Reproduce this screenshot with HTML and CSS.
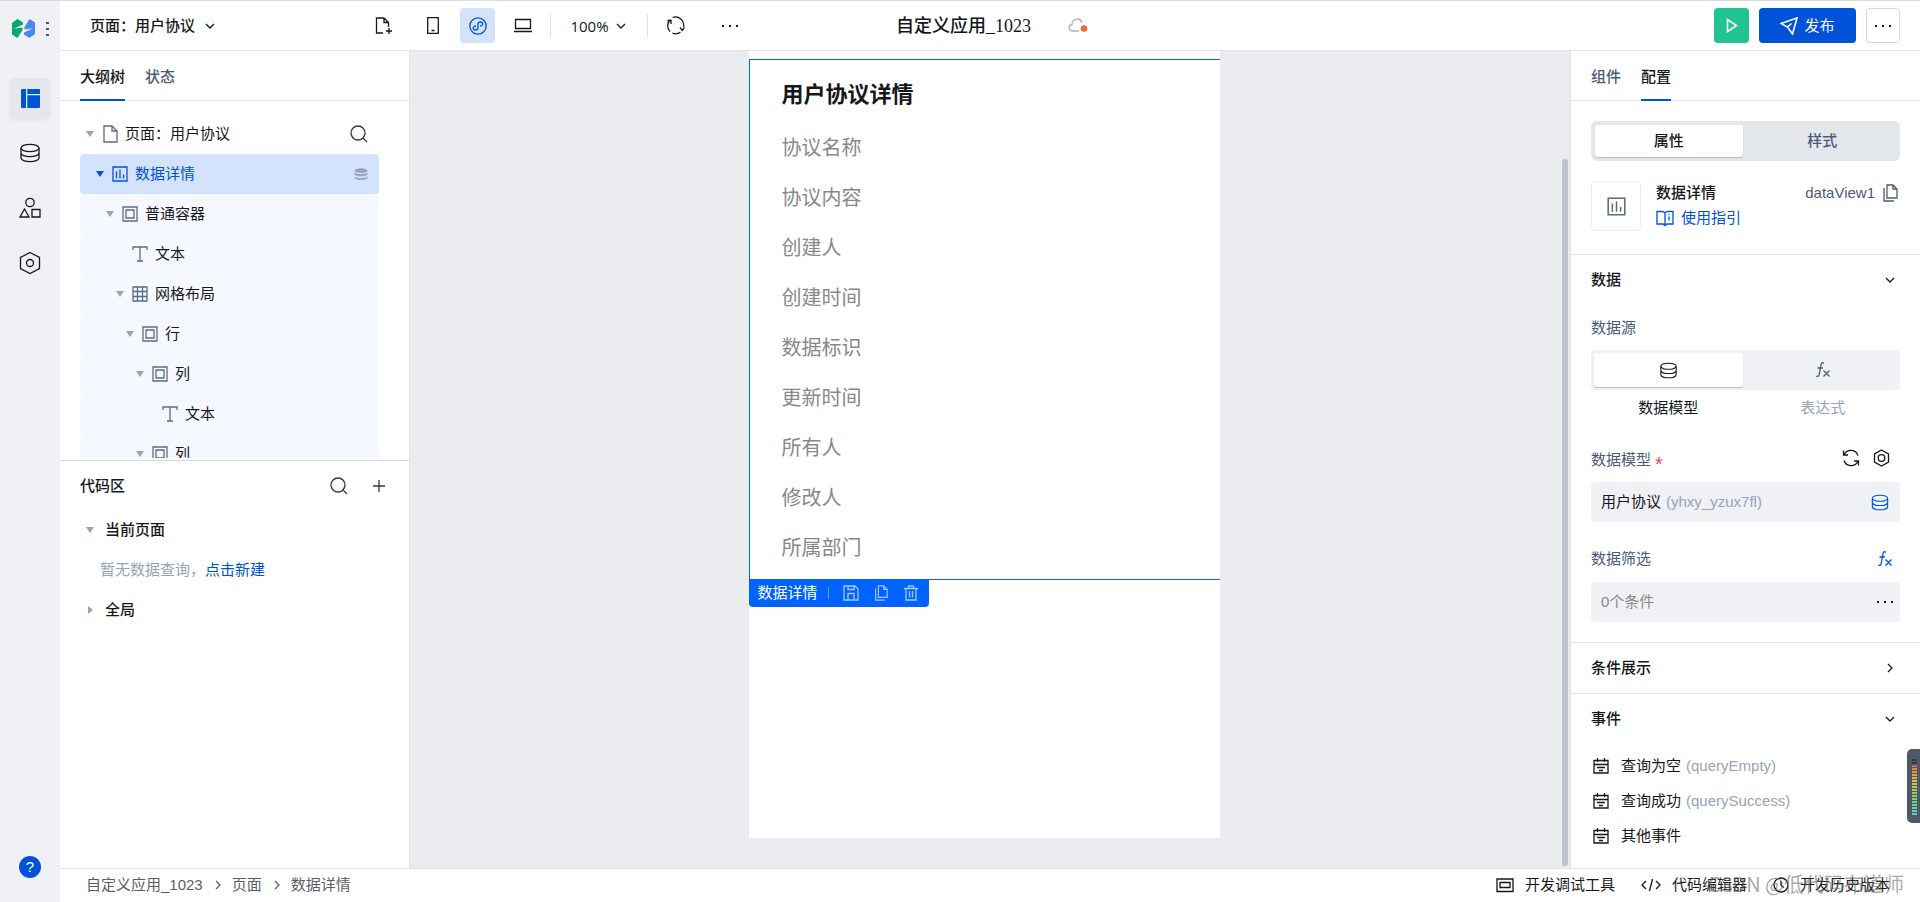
FILE: index.html
```html
<!DOCTYPE html>
<html lang="zh-CN">
<head>
<meta charset="utf-8">
<title>自定义应用_1023</title>
<link rel="stylesheet" href="styles.css">
</head>
<body>
<svg class="sprite" aria-hidden="true">
  <symbol id="chev-down" viewBox="0 0 10 10"><path d="M1 3l4 4 4-4"/></symbol>
  <symbol id="chev-right" viewBox="0 0 10 10"><path d="M3 1l4 4-4 4"/></symbol>
  <symbol id="caret" viewBox="0 0 8 8"><path class="solid" d="M0 1h8L4 7z"/></symbol>
  <symbol id="caret-right" viewBox="0 0 8 8"><path class="solid" d="M2 0v8l5-4z"/></symbol>
  <symbol id="db" viewBox="0 0 20 20"><ellipse cx="10" cy="5" rx="9" ry="3.6"/><path d="M1 5v10c0 2 4 3.6 9 3.6s9-1.600 9-3.600V5M1 10c0 2 4 3.600 9 3.600s9-1.600 9-3.600"/></symbol>
  <symbol id="db-solid" viewBox="0 0 14 13"><ellipse class="solid" cx="7" cy="2.600" rx="6.500" ry="2.300"/><path class="solid" d="M.5 4.500c2.500 2.200 10.500 2.200 13 0v2c-2 2.400-11 2.400-13 0zM.5 8.500c2.500 2.200 10.500 2.200 13 0v1.500c-2 2.800-11 2.800-13 0z"/></symbol>
  <symbol id="file" viewBox="0 0 16 18"><path d="M2 1h8l5 5v11H2zM10 1v5h5"/></symbol>
  <symbol id="chart" viewBox="0 0 16 16"><path d="M1 1h14v14H1zM4.500 5.500v7M8 3.500v9M11.500 8.500v4"/></symbol>
  <symbol id="box" viewBox="0 0 16 16"><path d="M1 1h14v14H1zM4 4h8v8H4z"/></symbol>
  <symbol id="text" viewBox="0 0 16 16"><path d="M1 4V1h14v3M8 1v14M5 15h6"/></symbol>
  <symbol id="grid" viewBox="0 0 16 16"><path d="M1 1h14v14H1zM5.500 1v14M10.500 1v14M1 5.500h14M1 10.500h14"/></symbol>
  <symbol id="search" viewBox="0 0 18 18"><circle cx="8" cy="8" r="7"/><path d="M13 13l4 4"/></symbol>
  <symbol id="dots" viewBox="0 0 16 4"><path class="solid" d="M0 1h2v2H0zM7 1h2v2H7zM14 1h2v2h-2z"/></symbol>
  <symbol id="copy" viewBox="0 0 16 18"><path d="M5 1h6l4 4v9H5zM11 1v4h4M2 4v13h10"/></symbol>
  <symbol id="hex" viewBox="0 0 22 24"><path d="M11 1.500l9.500 5v11L11 22.500l-9.500-5v-11z"/><circle cx="11" cy="12" r="3.500"/></symbol>
  <symbol id="hex-bold" viewBox="0 0 17 18"><path d="M8.500 1l7 4v8l-7 4-7-4V5z"/><circle cx="8.500" cy="9" r="3.300"/></symbol>
  <symbol id="sync" viewBox="0 0 18 18"><path d="M1.500 1.500V6H6M2.200 5.500A7.500 7.500 0 0 1 16 6.500M16.500 16.500V12H12M15.800 12.500A7.500 7.500 0 0 1 2 11.500"/></symbol>
  <symbol id="fx" viewBox="0 0 16 18"><path d="M9 2.500C7.500 1 6.300 1.800 6 3.500L4.200 13.500C3.900 15.300 2.700 16 1.300 15M2.500 7h5.500M8.500 9.500l6 6M14.500 9.500l-6 6"/></symbol>
  <symbol id="event" viewBox="0 0 16 16"><path d="M1 2.500h14v12.500H1zM1 6.500h14M4.500 0v4M11.500 0v4M4 9.500h8M6 12.500h4"/></symbol>
</svg>
<div class="app">
  <nav class="rail">
    <div class="brand">
      <svg class="logo" viewBox="0 0 24 20"><path fill="#07a869" d="M0 4L5.500 0 11 3.500V5.500L2 9.700 10.500 8.500V11L5.500 19 0 15.500z"/><path fill="#4a86f5" d="M23 15l-5.500 4L12 15.500v-2l9-4.200L12.500 10.500V8L17.500 0 23 3.500z"/></svg>
      <svg class="kebab" viewBox="0 0 3 16"><path d="M0 1h3v2H0zM0 7h3v2H0zM0 13h3v2H0z"/></svg>
    </div>
    <button class="rail-btn active" aria-label="布局"><svg class="layout" width="19" height="19" viewBox="0 0 19 19"><path d="M1 0h4v19H1q-1 0-1-1V1q0-1 1-1zM6.300 0H18q1 0 1 1v4H6.300zM6.300 6.300H19V18q0 1-1 1H6.300z"/></svg></button>
    <button class="rail-btn" aria-label="数据"><svg width="22" height="20"><use href="#db"/></svg></button>
    <button class="rail-btn" aria-label="组件"><svg width="22" height="22" viewBox="0 0 22 22"><circle cx="11" cy="5.500" r="4.200"/><path d="M5.500 12l4.500 8H1zM13 12.500h8v7.500h-8z"/></svg></button>
    <button class="rail-btn" aria-label="设置"><svg width="22" height="24"><use href="#hex"/></svg></button>
    <button class="help" aria-label="帮助">?</button>
  </nav>
  <div class="shell">
    <header class="topbar">
      <div class="top-left">
        <button class="page-select">页面：用户协议<svg class="i10"><use href="#chev-down"/></svg></button>
        <div class="tools">
          <button class="tool" aria-label="新建"><svg width="18" height="18" viewBox="0 0 18 18"><path d="M8 16H1.500V1H9l4.500 4.500V10M9 1v4.500h4.500M14 11v6M11 14h6"/></svg></button>
          <button class="tool" aria-label="手机"><svg width="12" height="17" viewBox="0 0 12 17"><path d="M.7.7h10.600v15.600H.7zM4.500 13.500h3"/></svg></button>
          <button class="tool active" aria-label="小程序"><svg width="18" height="18" viewBox="0 0 18 18"><circle cx="9" cy="9" r="8.200"/><path d="M7 9c-4 0-3 4-.5 4C8.300 13 9 12 9 11V7c0-1 .7-2 2.500-2 2.500 0 3.500 4-.5 4"/></svg></button>
          <button class="tool" aria-label="电脑"><svg width="18" height="15" viewBox="0 0 18 15"><path d="M1.500 1.500h15v9h-15zM0 13.500h18"/></svg></button>
          <button class="zoom">100%<svg class="i10"><use href="#chev-down"/></svg></button>
          <button class="tool" aria-label="刷新"><svg width="19" height="19" viewBox="0 0 19 19"><path d="M6.500 1.500a8.300 8.300 0 0 1 11 9.500M14.500 16a8.300 8.300 0 0 1-8 1.200M4 15.500A8.300 8.300 0 0 1 4.500 3.500M1.500 4.500H5V8M18.500 11.500l-2.300 3-2.200-3"/></svg></button>
          <button class="tool" aria-label="更多"><svg width="16" height="4"><use href="#dots"/></svg></button>
        </div>
      </div>
      <div class="app-name"><h1>自定义应用_1023</h1>
        <svg class="cloud" width="20" height="15" viewBox="0 0 20 15"><path d="M11 13H5C0 13 0 7 4 6.500 4.500 0 12.500-1 14 5"/><circle cx="16" cy="10.500" r="3.300"/></svg>
      </div>
      <div class="actions">
        <button class="run" aria-label="运行"><svg width="12" height="15" viewBox="0 0 12 15"><path d="M1.500 1.500v12l9-6z"/></svg></button>
        <button class="publish"><svg width="18" height="18" viewBox="0 0 18 18"><path d="M1 6.500L17 1l-4.500 16-5-7zM7.500 10l4-3.500"/></svg>发布</button>
        <button class="more" aria-label="更多"><svg width="16" height="4"><use href="#dots"/></svg></button>
      </div>
    </header>
    <div class="work">
      <aside class="left">
        <div class="tabs"><button class="tab on">大纲树</button><button class="tab">状态</button></div>
        <div class="tree">
          <div class="row root"><svg class="caret"><use href="#caret"/></svg><svg width="16" height="18"><use href="#file"/></svg><span>页面：用户协议</span><button class="row-end" aria-label="搜索"><svg width="18" height="18"><use href="#search"/></svg></button></div>
          <div class="row l1 sel"><svg class="caret"><use href="#caret"/></svg><svg class="i16"><use href="#chart"/></svg><span>数据详情</span><svg class="row-end dbs" width="14" height="13"><use href="#db-solid"/></svg></div>
          <div class="row l2"><svg class="caret"><use href="#caret"/></svg><svg class="i16"><use href="#box"/></svg><span>普通容器</span></div>
          <div class="row l3"><i class="caret"></i><svg class="i16"><use href="#text"/></svg><span>文本</span></div>
          <div class="row l3"><svg class="caret"><use href="#caret"/></svg><svg class="i16"><use href="#grid"/></svg><span>网格布局</span></div>
          <div class="row l4"><svg class="caret"><use href="#caret"/></svg><svg class="i16"><use href="#box"/></svg><span>行</span></div>
          <div class="row l5"><svg class="caret"><use href="#caret"/></svg><svg class="i16"><use href="#box"/></svg><span>列</span></div>
          <div class="row l6"><i class="caret"></i><svg class="i16"><use href="#text"/></svg><span>文本</span></div>
          <div class="row l5"><svg class="caret"><use href="#caret"/></svg><svg class="i16"><use href="#box"/></svg><span>列</span></div>
        </div>
        <section class="code">
          <div class="code-head"><h2>代码区</h2><button aria-label="搜索"><svg width="18" height="18"><use href="#search"/></svg></button><button aria-label="新增"><svg width="12" height="12" viewBox="0 0 12 12"><path d="M6 0v12M0 6h12"/></svg></button></div>
          <div class="group"><svg class="caret"><use href="#caret"/></svg>当前页面</div>
          <p class="empty">暂无数据查询，<a href="#new">点击新建</a></p>
          <div class="group"><svg class="caret"><use href="#caret-right"/></svg>全局</div>
        </section>
      </aside>
      <main class="canvas">
        <div class="stage">
          <div class="artboard">
            <div class="selection">
              <h2>用户协议详情</h2>
              <ul><li>协议名称</li><li>协议内容</li><li>创建人</li><li>创建时间</li><li>数据标识</li><li>更新时间</li><li>所有人</li><li>修改人</li><li>所属部门</li></ul>
              <div class="tag"><span>数据详情</span>
                <button aria-label="保存"><svg class="i16" viewBox="0 0 16 16"><path d="M1 1h11l3 3v11H1zM5 1v3.500h6V1M5 15V8.500h6V15"/></svg></button>
                <button aria-label="复制"><svg class="i16"><use href="#copy"/></svg></button>
                <button aria-label="删除"><svg class="i16" viewBox="0 0 16 16"><path d="M1 3.500h14M5.500 3V1h5v2M3 3.500V15h10V3.500M6.500 6v6.500M9.500 6v6.500"/></svg></button>
              </div>
            </div>
          </div>
        </div>
        <div class="track"><div class="thumb"></div></div>
      </main>
      <aside class="right">
        <div class="tabs"><button class="tab">组件</button><button class="tab on">配置</button></div>
        <section class="intro">
          <div class="seg"><button class="on">属性</button><button>样式</button></div>
          <div class="comp">
            <div class="comp-icon"><svg width="19" height="19"><use href="#chart"/></svg></div>
            <div class="comp-text"><strong>数据详情</strong><a href="#guide"><svg width="18" height="17" viewBox="0 0 18 17"><path d="M9 3v11M9 3Q8 1.500 6 1.500H1V14h5.500Q8.500 14 9 16 9.500 14 11.500 14H17V1.500h-5Q10 1.500 9 3M13 6.500v4M13 4v1"/></svg>使用指引</a></div>
            <div class="comp-id">dataView1<button aria-label="复制"><svg width="16" height="18"><use href="#copy"/></svg></button></div>
          </div>
        </section>
        <section class="data">
          <button class="sec-head">数据<svg class="i10"><use href="#chev-down"/></svg></button>
          <div class="label">数据源</div>
          <div class="seg light"><button class="on" aria-label="数据模型"><svg width="17" height="17"><use href="#db"/></svg></button><button aria-label="表达式"><svg width="16" height="18"><use href="#fx"/></svg></button></div>
          <div class="caps"><span>数据模型</span><span>表达式</span></div>
          <div class="label model">数据模型<b>*</b><button aria-label="刷新"><svg width="18" height="18"><use href="#sync"/></svg></button><button aria-label="设置"><svg width="17" height="18"><use href="#hex-bold"/></svg></button></div>
          <button class="field">用户协议<em>(yhxy_yzux7fl)</em><svg class="blue" width="18" height="17"><use href="#db"/></svg></button>
          <div class="label filter">数据筛选<button class="blue" aria-label="表达式"><svg width="16" height="18"><use href="#fx"/></svg></button></div>
          <button class="field cond">0个条件<svg width="16" height="4"><use href="#dots"/></svg></button>
        </section>
        <section><button class="sec-head">条件展示<svg class="i10"><use href="#chev-right"/></svg></button></section>
        <section class="events">
          <button class="sec-head">事件<svg class="i10"><use href="#chev-down"/></svg></button>
          <ul>
            <li><svg class="i16"><use href="#event"/></svg>查询为空<em>(queryEmpty)</em></li>
            <li><svg class="i16"><use href="#event"/></svg>查询成功<em>(querySuccess)</em></li>
            <li><svg class="i16"><use href="#event"/></svg>其他事件</li>
          </ul>
        </section>
      </aside>
    </div>
    <footer class="bottom">
      <nav class="crumbs"><a href="#app">自定义应用_1023</a><svg class="i10"><use href="#chev-right"/></svg><a href="#page">页面</a><svg class="i10"><use href="#chev-right"/></svg><a href="#view">数据详情</a></nav>
      <div class="dev">
        <button><svg width="18" height="16" viewBox="0 0 18 16"><path d="M1 2h16v12.500H1zM4 5.500h10v5H4z"/></svg>开发调试工具</button>
        <button><svg width="20" height="14" viewBox="0 0 20 14"><path d="M5 3L1 7l4 4M15 3l4 4-4 4M11.500 1l-3 12"/></svg>代码编辑器</button>
        <button><svg class="i16" viewBox="0 0 16 16"><circle cx="8" cy="8" r="7"/><path d="M8 4v4.500l3 2"/></svg>开发历史版本</button>
      </div>
    </footer>
  </div>
  <div class="meter"><div class="bars"></div></div>
  <div class="watermark">CSDN @低代码布道师</div>
</div>
</body>
</html>
```

FILE: styles.css
```css
* { box-sizing: border-box; }
body { margin: 0; font: 15px/20px "Liberation Sans", "Noto Sans CJK SC", sans-serif; color: #15171c; background: #fff; }
h1, h2, ul, p { margin: 0; padding: 0; }
li { list-style: none; }
em { font-style: normal; color: #97a3b7; margin-left: 5px; }
a { color: #0052d9; text-decoration: none; }
button { border: 0; padding: 0; background: none; color: inherit; font: inherit; cursor: pointer; display: flex; align-items: center; justify-content: center; }
svg { fill: none; stroke: currentColor; stroke-width: 1.3px; flex: none; }
.sprite { position: absolute; width: 0; height: 0; }
.solid { fill: currentColor; stroke: none; }
.i10 { width: 10px; height: 10px; }
.i16 { width: 16px; height: 16px; }
.blue { color: #0052d9; }

.app { display: flex; height: 100vh; position: relative; overflow: hidden; border-top: 1px solid #d9d9d9; }
.rail { width: 60px; background: #f0f1f5; display: flex; flex-direction: column; align-items: center; gap: 15px; padding-bottom: 24px; }
.brand { height: 62px; align-self: stretch; display: flex; padding: 18px 0 0 12px; gap: 10px; }
.logo { width: 24px; height: 20px; stroke: none; }
.kebab { width: 3px; height: 20px; fill: #4b5b76; stroke: none; }
.layout { fill: #0052d9; stroke: none; }
.rail-btn { width: 40px; height: 40px; border-radius: 4px; }
.rail-btn.active { background: #e5e7ec; box-shadow: 0 2px 4px #0000000d; }
.help { margin-top: auto; width: 22px; height: 22px; border-radius: 50%; background: #0052d9; color: #fff; }

.shell { flex: 1; min-width: 0; display: flex; flex-direction: column; }
.topbar { height: 50px; border-bottom: 1px solid #e1e4ea; display: grid; grid-template-columns: 1fr auto 1fr; align-items: center; padding-right: 20px; }
.top-left { display: flex; align-items: center; }
.page-select { width: 155px; margin-left: 30px; gap: 10px; justify-content: flex-start; font-weight: 500; white-space: nowrap; }
.tools { display: flex; align-items: center; gap: 10px; margin-left: 121px; }
.tool { width: 35px; height: 35px; border-radius: 4px; }
.tools .tool:first-child { margin-right: 4px; }
.tools .tool:last-child { margin-left: 9px; }
.tool.active { background: #d4e3fc; color: #0052d9; }
.zoom { font-family: "Open Sans", sans-serif; height: 24px; width: 98px; gap: 7px; padding-right: 2px; border: solid #dfe2e8; border-width: 0 1px; }
.app-name { display: flex; align-items: center; gap: 37px; padding-left: 24px; }
h1 { font: 500 18px/24px "Liberation Serif", "Noto Sans CJK SC", serif; }
.cloud path { stroke: #a6b1c2; }
.cloud circle { fill: #ed6c2f; stroke: none; }
.actions { display: flex; justify-content: flex-end; gap: 10px; }
.run, .publish, .more { height: 35px; border-radius: 4px; color: #fff; }
.run { width: 35px; background: #20c391; }
.publish { width: 97px; gap: 6px; background: #0052d9; }
.run svg, .publish svg { stroke-width: 1.6px; }
.more { width: 34px; border: 1px solid #d3d8e0; color: #15171c; }

.work { flex: 1; min-height: 0; display: flex; }
.left { width: 350px; border-right: 1px solid #e1e4ea; display: flex; flex-direction: column; }
.tabs { display: flex; gap: 20px; height: 50px; padding: 0 20px; border-bottom: 1px solid #e1e4ea; flex: none; }
.tab { height: 50px; padding-top: 4px; border-bottom: 2px solid transparent; color: #4b5b76; font-weight: 500; }
.tab.on { color: #15171c; border-color: #0052d9; }
.tree { height: 357px; margin: 0 30px 2px 20px; padding-top: 13px; overflow: hidden; }
.row { height: 40px; display: flex; align-items: center; padding: 0 11px 0 6px; border-radius: 4px; background: #f5f8ff; color: #5b6b87; }
.row span { margin-left: 7px; color: #15171c; }
.caret { width: 8px; height: 8px; margin-right: 8px; color: #97a3b7; }
.row.root { background: none; }
.row.sel { background: #d4e3fc; }
.row.sel, .row.sel span, .row.sel .caret { color: #0052d9; }
.row-end { margin-left: auto; color: #33373f; }
.row .dbs { color: #97a3b7; }
.l1 { padding-left: 16px; }
.l2 { padding-left: 26px; }
.l3 { padding-left: 36px; }
.l4 { padding-left: 46px; }
.l5 { padding-left: 56px; }
.l6 { padding-left: 66px; }
.code { flex: 1; border-top: 1px solid #d3dae6; }
.code-head { height: 49px; display: flex; align-items: center; gap: 25px; padding: 0 24px 0 20px; color: #33373f; }
h2 { font-size: 15px; font-weight: 500; color: #15171c; }
.code-head h2 { margin-right: auto; }
.group { height: 40px; display: flex; align-items: center; padding-left: 26px; font-weight: 500; }
.group .caret { margin-right: 11px; }
.empty { line-height: 40px; padding-left: 40px; color: #97a3b7; }

.canvas { flex: 1; min-width: 0; display: flex; background: #ebecf0; }
.stage { flex: 1; display: flex; justify-content: center; padding-bottom: 30px; }
.artboard { width: 471px; background: #fff; padding-top: 8px; }
.selection { position: relative; border: solid #0062ff; border-width: 1px 0 1px 1px; padding: 7px 0 6px 32px; }
.selection h2 { font-size: 22px; line-height: 56px; font-weight: 700; }
.selection li { font-size: 20px; line-height: 50px; color: #888; }
.tag { position: absolute; top: 100%; left: -1px; width: 180px; height: 28px; display: flex; align-items: center; gap: 14px; padding-left: 9px; border-radius: 0 0 4px 4px; background: #0062ff; color: #fff; }
.tag span { padding-right: 10px; line-height: 12px; border-right: 1px solid #5c9aff; }
.tag button { color: #a5c8ff; }
.track { width: 12px; padding: 108px 2px 2px 4px; }
.thumb { width: 6px; height: 100%; border-radius: 3px; background: #bcc4d0; }

.right { width: 350px; border-left: 1px solid #dfe2e8; overflow: hidden; }
.right section { border-bottom: 1px solid #e1e4ea; padding: 0 20px; }
.right section.intro { padding: 20px 20px 23px; }
.seg { height: 40px; border-radius: 6px; background: #e3e6eb; padding: 4px; display: grid; grid-template-columns: 1fr 1fr; gap: 6px; font-weight: 500; color: #4b5b76; }
.seg .on { background: #fff; border-radius: 3px; box-shadow: 0 1px 1px #b3bccb; color: #15171c; }
.seg.light { background: #f0f1f5; border-radius: 4px; padding: 3px; }
.comp { display: flex; margin-top: 20px; }
.comp-icon { width: 50px; height: 50px; border: 1px solid #eceef2; border-radius: 4px; display: flex; align-items: center; justify-content: center; color: #5b6b87; }
.comp-text { margin-left: 15px; display: grid; gap: 3px; align-content: start; }
.comp-text strong { font-weight: 500; line-height: 24px; }
.comp-text a { display: flex; align-items: center; gap: 7px; }
.comp-id { margin-left: auto; display: flex; gap: 7px; height: 24px; align-items: center; color: #4b5b76; padding-right: 2px; }
.sec-head { width: 100%; height: 50px; justify-content: space-between; padding-right: 5px; font-weight: 500; }
.label { height: 30px; display: flex; align-items: center; color: #4b5b76; margin-top: 8px; }
.label.model { margin-top: 19px; gap: 13px; padding-right: 10px; }
.label b { height: 12px; margin: 0 auto 0 -9px; color: #e34d59; font-size: 20px; font-weight: 400; }
.label.model button { height: 26px; align-self: flex-start; color: #15171c; }
.label.filter { margin: 22px 0 8px; padding-right: 7px; justify-content: space-between; }
.data .seg { margin-top: 7px; }
.caps { display: grid; grid-template-columns: 1fr 1fr; gap: 6px; text-align: center; line-height: 36px; padding: 0 3px; }
.caps span + span { color: #97a3b7; }
.field { width: 100%; height: 40px; border-radius: 4px; background: #f0f1f5; justify-content: flex-start; padding: 0 11px 0 10px; }
.model + .field { margin-top: 7px; }
.field svg { margin-left: auto; }
.cond { color: #888; padding-right: 7px; }
.cond svg { color: #15171c; }
.right section.data { padding-bottom: 20px; }
.right section.events { border: 0; }
.events ul { padding-top: 4px; }
.events li { height: 35px; display: flex; align-items: center; padding-left: 2px; }
.events svg.i16 { margin-right: 12px; }

.bottom { height: 34px; border-top: 1px solid #e1e4ea; display: flex; align-items: center; justify-content: space-between; padding: 0 30px 2px 26px; }
.crumbs, .dev { display: flex; align-items: center; }
.crumbs a { color: #5a5e66; }
.crumbs svg { margin: 0 9px 0 10px; color: #5a5e66; }
.dev { gap: 26px; }
.dev button { gap: 11px; }
.meter { position: absolute; right: 0; top: 748px; width: 13px; height: 74px; border-radius: 5px 0 0 5px; background: #505868; padding: 9px 3px 8px 5px; }
.bars { height: 100%; background: repeating-linear-gradient(#505868 0 1px, transparent 1px 3px), linear-gradient(#333a48 0 12%, #e57a50 14%, #d8c34c 40%, #8fcf68 65%, #48d8c0); }
.watermark { position: absolute; right: 16px; bottom: 4px; font: 20px/28px "Noto Sans CJK SC", sans-serif; color: #6b6b6b99; }
```
